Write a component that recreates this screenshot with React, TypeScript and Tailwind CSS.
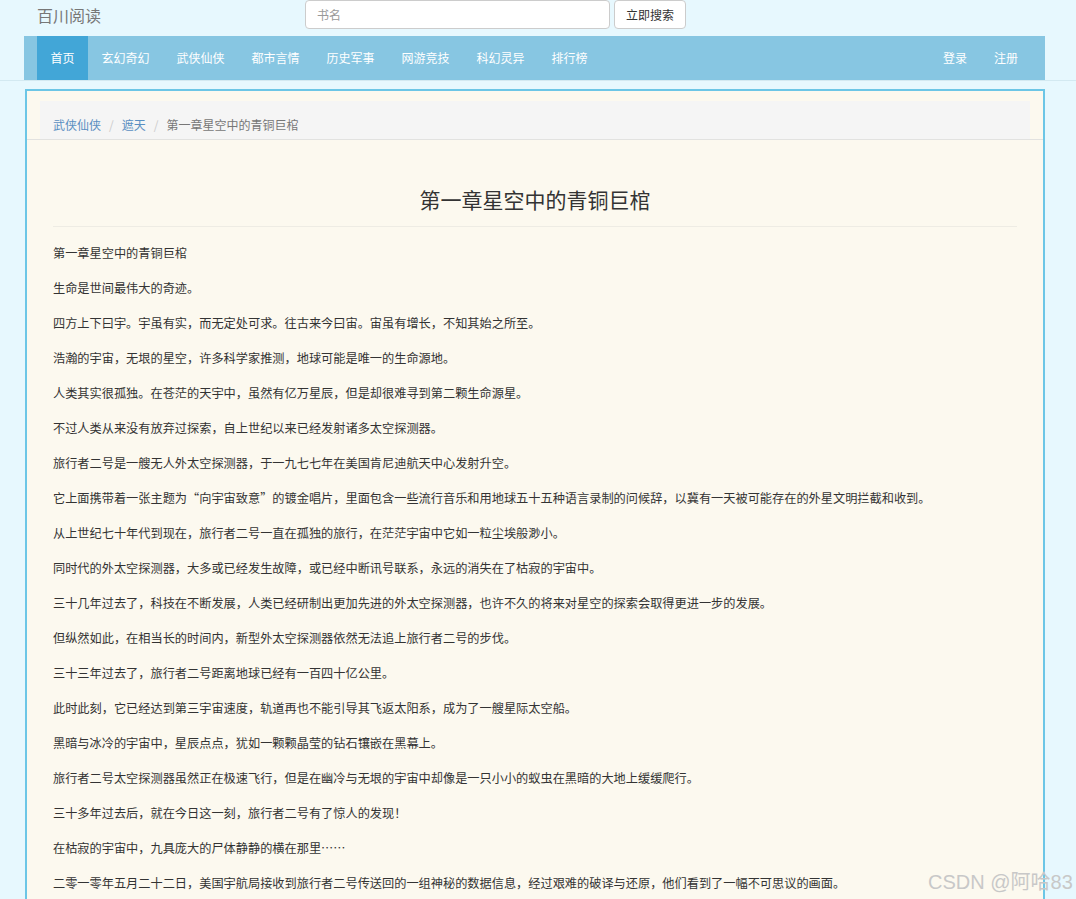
const NAV_ITEMS = ["首页", "玄幻奇幻", "武侠仙侠", "都市言情", "历史军事", "网游竞技", "科幻灵异", "排行榜"];

const PARAGRAPHS = [
  "第一章星空中的青铜巨棺",
  "生命是世间最伟大的奇迹。",
  "四方上下曰宇。宇虽有实，而无定处可求。往古来今曰宙。宙虽有增长，不知其始之所至。",
  "浩瀚的宇宙，无垠的星空，许多科学家推测，地球可能是唯一的生命源地。",
  "人类其实很孤独。在苍茫的天宇中，虽然有亿万星辰，但是却很难寻到第二颗生命源星。",
  "不过人类从来没有放弃过探索，自上世纪以来已经发射诸多太空探测器。",
  "旅行者二号是一艘无人外太空探测器，于一九七七年在美国肯尼迪航天中心发射升空。",
  "它上面携带着一张主题为“向宇宙致意”的镀金唱片，里面包含一些流行音乐和用地球五十五种语言录制的问候辞，以冀有一天被可能存在的外星文明拦截和收到。",
  "从上世纪七十年代到现在，旅行者二号一直在孤独的旅行，在茫茫宇宙中它如一粒尘埃般渺小。",
  "同时代的外太空探测器，大多或已经发生故障，或已经中断讯号联系，永远的消失在了枯寂的宇宙中。",
  "三十几年过去了，科技在不断发展，人类已经研制出更加先进的外太空探测器，也许不久的将来对星空的探索会取得更进一步的发展。",
  "但纵然如此，在相当长的时间内，新型外太空探测器依然无法追上旅行者二号的步伐。",
  "三十三年过去了，旅行者二号距离地球已经有一百四十亿公里。",
  "此时此刻，它已经达到第三宇宙速度，轨道再也不能引导其飞返太阳系，成为了一艘星际太空船。",
  "黑暗与冰冷的宇宙中，星辰点点，犹如一颗颗晶莹的钻石镶嵌在黑幕上。",
  "旅行者二号太空探测器虽然正在极速飞行，但是在幽冷与无垠的宇宙中却像是一只小小的蚁虫在黑暗的大地上缓缓爬行。",
  "三十多年过去后，就在今日这一刻，旅行者二号有了惊人的发现！",
  "在枯寂的宇宙中，九具庞大的尸体静静的横在那里……",
  "二零一零年五月二十二日，美国宇航局接收到旅行者二号传送回的一组神秘的数据信息，经过艰难的破译与还原，他们看到了一幅不可思议的画面。",
];

const FONT = "font-['Microsoft_YaHei','Noto_Sans_CJK_SC',sans-serif]";

export default function App() {
  return (
    <div className={`relative min-h-screen bg-[#e7f8fe] ${FONT} text-[#333]`}>
      {/* Header + navbar */}
      <div className="border-b border-[#d3e9f1]">
        <div className="mx-[24px] w-[1021px]">
          <div className="flex h-[36px] items-start pl-[13px]">
            <div className="mt-[4px] w-[268px] text-[16px] leading-[22px] text-[#777]">百川阅读</div>
            <input
              placeholder="书名"
              className="h-[29px] w-[305px] rounded-[4px] border border-[#ccc] bg-white px-[11px] text-[12px] placeholder:text-[#999] outline-none"
            />
            <button
              type="button"
              className="ml-[4px] h-[29px] w-[72px] rounded-[4px] border border-[#ccc] bg-white text-[12px] text-[#333]"
            >
              立即搜索
            </button>
          </div>

          <nav className="flex h-[44px] items-stretch bg-[#87c6e2] pl-[13px] pr-[13.5px] text-[12px] text-white">
            {NAV_ITEMS.map((item, i) => (
              <a
                key={item}
                className={`flex items-center px-[13.5px] ${i === 0 ? "bg-[#42a6d7]" : ""}`}
              >
                {item}
              </a>
            ))}
            <div className="ml-auto flex">
              <a className="flex items-center px-[13.5px]">登录</a>
              <a className="flex items-center px-[13.5px]">注册</a>
            </div>
          </nav>
        </div>
      </div>

      {/* Chapter panel */}
      <div className="ml-[25px] mt-[8px] w-[1020px] border-2 border-b-0 border-[#6cc6e6] bg-[#fcf9ef]">
        <div className="border-b border-[#e2e2e0] px-[13px] pt-[10px]">
          <div className="flex h-[38px] items-center bg-[#f5f5f5] px-[13px] pt-[9px] text-[12px]">
            <a className="text-[#5a8fc2]">武侠仙侠</a>
            <span className="px-[8px] text-[#ccc]">/</span>
            <a className="text-[#5a8fc2]">遮天</a>
            <span className="px-[8px] text-[#ccc]">/</span>
            <span className="text-[#777]">第一章星空中的青铜巨棺</span>
          </div>
        </div>

        <div className="px-[26px] pt-[44px] pb-[20px]">
          <h1 className="text-center text-[21px] leading-[30px] text-[#333]">第一章星空中的青铜巨棺</h1>
          <div className="mt-[12px] border-t border-[#eeece4]" />
          <div className="mt-[14px] text-[12.2px]">
            {PARAGRAPHS.map((p, i) => (
              <p key={i} className="mb-[10px] leading-[25px]">
                {p}
              </p>
            ))}
          </div>
        </div>
      </div>

      {/* watermark */}
      <div className="absolute left-[928px] top-[869px] text-[20px] leading-[26px] text-[#c8c8c8] font-['Liberation_Sans','Noto_Sans_CJK_SC',sans-serif]">
        CSDN @阿哈83
      </div>
    </div>
  );
}
